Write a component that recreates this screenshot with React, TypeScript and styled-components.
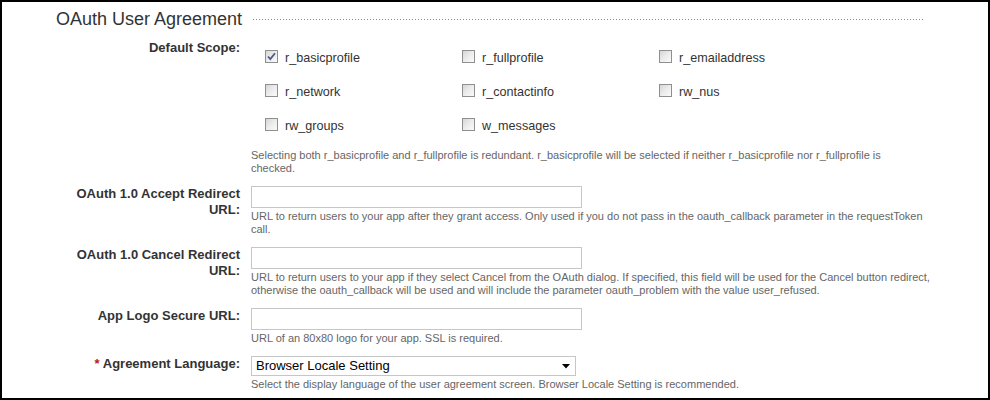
import styled, { createGlobalStyle } from 'styled-components'

const GlobalStyle = createGlobalStyle`
  html, body {
    margin: 0;
    padding: 0;
    background: #fff;
  }
  body {
    font-family: "Liberation Sans", Arial, sans-serif;
  }
`

const Frame = styled.div`
  box-sizing: border-box;
  width: 990px;
  height: 400px;
  border: 2px solid #000;
  padding-top: 7px;
  background: #fff;
  overflow: hidden;
  color: #333;
`

const Header = styled.div`
  display: flex;
  align-items: center;
  padding: 0 64px 0 54px;
`

const Title = styled.h2`
  margin: 0;
  font-size: 18px;
  line-height: 20px;
  font-weight: normal;
  color: #333;
`

const Rule = styled.div`
  flex: 1;
  height: 1px;
  margin-left: 11px;
  background-image: linear-gradient(to right, #8c8c8c 1px, transparent 1px);
  background-size: 3px 1px;
  background-repeat: repeat-x;
`

const Form = styled.div`
  padding-left: 48px;
`

const Row = styled.div`
  display: grid;
  grid-template-columns: 190px 1fr;
  column-gap: 11px;
  margin-top: 11px;
`

const Label = styled.div`
  font-size: 13px;
  font-weight: bold;
  line-height: 16px;
  text-align: right;
  color: #333;
`

const Required = styled.span`
  color: #b3201a;
`

const Field = styled.div<{ $top?: number }>`
  padding-top: ${(p) => p.$top ?? 0}px;
`

const ScopeGrid = styled.div`
  display: grid;
  grid-template-columns: repeat(3, 197px);
  row-gap: 18px;
  padding-left: 14px;
`

const ScopeItem = styled.label`
  display: flex;
  align-items: flex-start;
  gap: 7px;
  font-size: 12.6px;
  line-height: 16px;
  color: #333;
`

const Box = styled.span`
  box-sizing: border-box;
  width: 13px;
  height: 13px;
  border: 1px solid #8f8f8f;
  background: linear-gradient(135deg, #d6d6d6 0%, #ececec 50%, #fafafa 100%);
  display: flex;
  align-items: center;
  justify-content: center;
  flex-shrink: 0;
`

const Hint = styled.div<{ $top?: number }>`
  margin-top: ${(p) => p.$top ?? 2}px;
  font-size: 11px;
  line-height: 13px;
  color: #666;
  white-space: nowrap;
`

const TextInput = styled.div`
  box-sizing: border-box;
  width: 331px;
  height: 22px;
  border: 1px solid #c6c6c6;
  background: #fff;
`

const Select = styled.div`
  box-sizing: border-box;
  width: 325px;
  height: 20px;
  border: 1px solid #c6c6c6;
  background: #fff;
  display: flex;
  align-items: center;
  justify-content: space-between;
  padding: 0 5px 0 4px;
  font-size: 13px;
  line-height: 18px;
  color: #000;
`

const Check = () => (
  <svg width="9" height="9" viewBox="0 0 9 9">
    <path d="M1 4.5 L3.3 7 L8 1.2" fill="none" stroke="#4a5b86" strokeWidth="1.8" />
  </svg>
)

const Arrow = () => (
  <svg width="8" height="5" viewBox="0 0 8 5">
    <path d="M0 0 H8 L4 4.5 Z" fill="#000" />
  </svg>
)

const scopes = [
  { name: 'r_basicprofile', checked: true },
  { name: 'r_fullprofile' },
  { name: 'r_emailaddress' },
  { name: 'r_network' },
  { name: 'r_contactinfo' },
  { name: 'rw_nus' },
  { name: 'rw_groups' },
  { name: 'w_messages' },
]

export default function App() {
  return (
    <>
      <GlobalStyle />
      <Frame>
        <Header>
          <Title>OAuth User Agreement</Title>
          <Rule />
        </Header>
        <Form>
          <Row>
            <Label>Default Scope:</Label>
            <Field $top={9.5}>
              <ScopeGrid>
                {scopes.map((s) => (
                  <ScopeItem key={s.name}>
                    <Box>{s.checked && <Check />}</Box>
                    {s.name}
                  </ScopeItem>
                ))}
              </ScopeGrid>
              <Hint $top={15.5}>
                Selecting both r_basicprofile and r_fullprofile is redundant. r_basicprofile will be selected if neither r_basicprofile nor r_fullprofile is
                <br />
                checked.
              </Hint>
            </Field>
          </Row>
          <Row>
            <Label>
              OAuth 1.0 Accept Redirect
              <br />
              URL:
            </Label>
            <Field>
              <TextInput />
              <Hint>
                URL to return users to your app after they grant access. Only used if you do not pass in the oauth_callback parameter in the requestToken
                <br />
                call.
              </Hint>
            </Field>
          </Row>
          <Row>
            <Label>
              OAuth 1.0 Cancel Redirect
              <br />
              URL:
            </Label>
            <Field>
              <TextInput />
              <Hint>
                URL to return users to your app if they select Cancel from the OAuth dialog. If specified, this field will be used for the Cancel button redirect,
                <br />
                otherwise the oauth_callback will be used and will include the parameter oauth_problem with the value user_refused.
              </Hint>
            </Field>
          </Row>
          <Row>
            <Label>App Logo Secure URL:</Label>
            <Field>
              <TextInput />
              <Hint>URL of an 80x80 logo for your app. SSL is required.</Hint>
            </Field>
          </Row>
          <Row>
            <Label>
              <Required>*</Required> Agreement Language:
            </Label>
            <Field>
              <Select>
                <span>Browser Locale Setting</span>
                <Arrow />
              </Select>
              <Hint>Select the display language of the user agreement screen. Browser Locale Setting is recommended.</Hint>
            </Field>
          </Row>
        </Form>
      </Frame>
    </>
  )
}
